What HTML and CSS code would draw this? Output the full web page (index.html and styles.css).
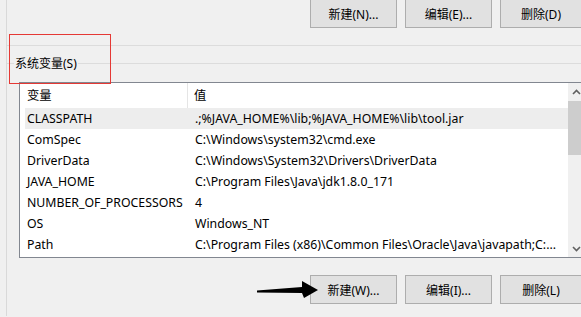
FILE: index.html
```html
<!DOCTYPE html>
<html lang="zh-CN">
<head>
    <meta charset="UTF-8">
    <title>环境变量</title>
    <link rel="stylesheet" href="styles.css">
</head>
<body>
    <div class="frame">
        <div class="btn-row top-row">
            <button class="btn">新建(N)...</button>
            <button class="btn">编辑(E)...</button>
            <button class="btn btn-last">删除(D)</button>
        </div>
        <div class="user-group-end"></div>

        <div class="group">
            <span class="group-label">系统变量(S)</span>
            <div class="list">
                <div class="list-body">
                    <div class="list-head">
                        <div class="head-name">变量</div>
                        <div class="head-value">值</div>
                    </div>
                    <div class="row selected">
                        <div class="cell-name">CLASSPATH</div>
                        <div class="cell-value">.;%JAVA_HOME%\lib;%JAVA_HOME%\lib\tool.jar</div>
                    </div>
                    <div class="row">
                        <div class="cell-name">ComSpec</div>
                        <div class="cell-value">C:\Windows\system32\cmd.exe</div>
                    </div>
                    <div class="row">
                        <div class="cell-name">DriverData</div>
                        <div class="cell-value">C:\Windows\System32\Drivers\DriverData</div>
                    </div>
                    <div class="row">
                        <div class="cell-name">JAVA_HOME</div>
                        <div class="cell-value">C:\Program Files\Java\jdk1.8.0_171</div>
                    </div>
                    <div class="row">
                        <div class="cell-name">NUMBER_OF_PROCESSORS</div>
                        <div class="cell-value">4</div>
                    </div>
                    <div class="row">
                        <div class="cell-name">OS</div>
                        <div class="cell-value">Windows_NT</div>
                    </div>
                    <div class="row">
                        <div class="cell-name">Path</div>
                        <div class="cell-value">C:\Program Files (x86)\Common Files\Oracle\Java\javapath;C:...</div>
                    </div>
                </div>
                <div class="scrollbar">
                    <div class="scroll-btn">
                        <svg width="9" height="6" viewBox="0 0 9 6"><polyline points="1,5 4.5,1.5 8,5" fill="none" stroke="#606060" stroke-width="1.6"/></svg>
                    </div>
                    <div class="scroll-thumb"></div>
                    <div class="scroll-track"></div>
                    <div class="scroll-btn">
                        <svg width="9" height="6" viewBox="0 0 9 6"><polyline points="1,1 4.5,4.5 8,1" fill="none" stroke="#606060" stroke-width="1.6"/></svg>
                    </div>
                </div>
            </div>

            <div class="btn-row bottom-row">
                <button class="btn">新建(W)...</button>
                <button class="btn">编辑(I)...</button>
                <button class="btn btn-last">删除(L)</button>
            </div>
        </div>
    </div>

    <!-- annotations drawn over the dialog -->
    <div class="mark-box"></div>
    <svg class="mark-arrow" width="72" height="24" viewBox="0 0 72 24">
        <polygon points="7,12.5 52,9 52,3 68,12 54,20 52,15 7,14.5" fill="#000"/>
    </svg>
</body>
</html>
```

FILE: styles.css
```css
body {
    margin: 0;
    width: 581px;
    height: 317px;
    overflow: hidden;
    background: #f0f0f0;
    font-family: "Noto Sans", "Noto Sans CJK SC", sans-serif;
    font-size: 12px;
    color: #000;
    position: relative;
}
.frame {
    margin-left: 6px;
    height: 317px;
    border-left: 1px solid #d9d9d9;
}
.btn-row {
    display: flex;
    gap: 8px;
    padding-left: 303px;
}
.top-row {
    margin-top: -1px;
}
.btn {
    flex-shrink: 0;
    width: 87px;
    height: 29px;
    padding: 0;
    border: 1px solid #adadad;
    background: #e1e1e1;
    font-family: inherit;
    font-size: 12px;
    color: #000;
}
.btn-last {
    width: 82px;
}
.user-group-end {
    height: 17px;
    border-bottom: 1px solid #dcdcdc;
}
.group {
    margin-top: 17px;
    border-top: 1px solid #dcdcdc;
}
.group-label {
    display: block;
    width: max-content;
    margin: -9px 0 0 7px;
    padding: 0 1px;
    line-height: 17px;
    background: #f0f0f0;
}
.list {
    display: flex;
    margin: 10px 0 0 12px;
    width: 580px;
    height: 174px;
    border: 1px solid #828790;
    background: #fff;
    font-size: 12.3px;
}
.list-body {
    width: 548px;
    flex-shrink: 0;
    overflow: hidden;
}
.list-head {
    display: flex;
    height: 25px;
    line-height: 25px;
}
.head-name {
    width: 160px;
    padding-left: 7px;
    border-right: 1px solid #e5e5e5;
}
.head-value {
    padding-left: 6px;
}
.row {
    display: flex;
    margin-left: 5px;
    height: 21px;
    line-height: 21px;
    white-space: nowrap;
}
.row.selected {
    background: #ededed;
}
.cell-name {
    width: 161px;
    padding-left: 2px;
}
.cell-value {
    padding-left: 7px;
}
.scrollbar {
    width: 17px;
    flex-shrink: 0;
    display: flex;
    flex-direction: column;
    background: #f0f0f0;
}
.scroll-btn {
    height: 17px;
    display: flex;
    align-items: center;
    justify-content: center;
}
.scroll-thumb {
    margin-top: 1px;
    height: 54px;
    background: #cdcdcd;
}
.scroll-track {
    flex: 1;
}
.bottom-row {
    margin-top: 17px;
}
.mark-box {
    position: absolute;
    left: 9px;
    top: 34px;
    width: 100px;
    height: 48px;
    border: 1px solid #e53935;
}
.mark-arrow {
    position: absolute;
    left: 250px;
    top: 278px;
}
```
